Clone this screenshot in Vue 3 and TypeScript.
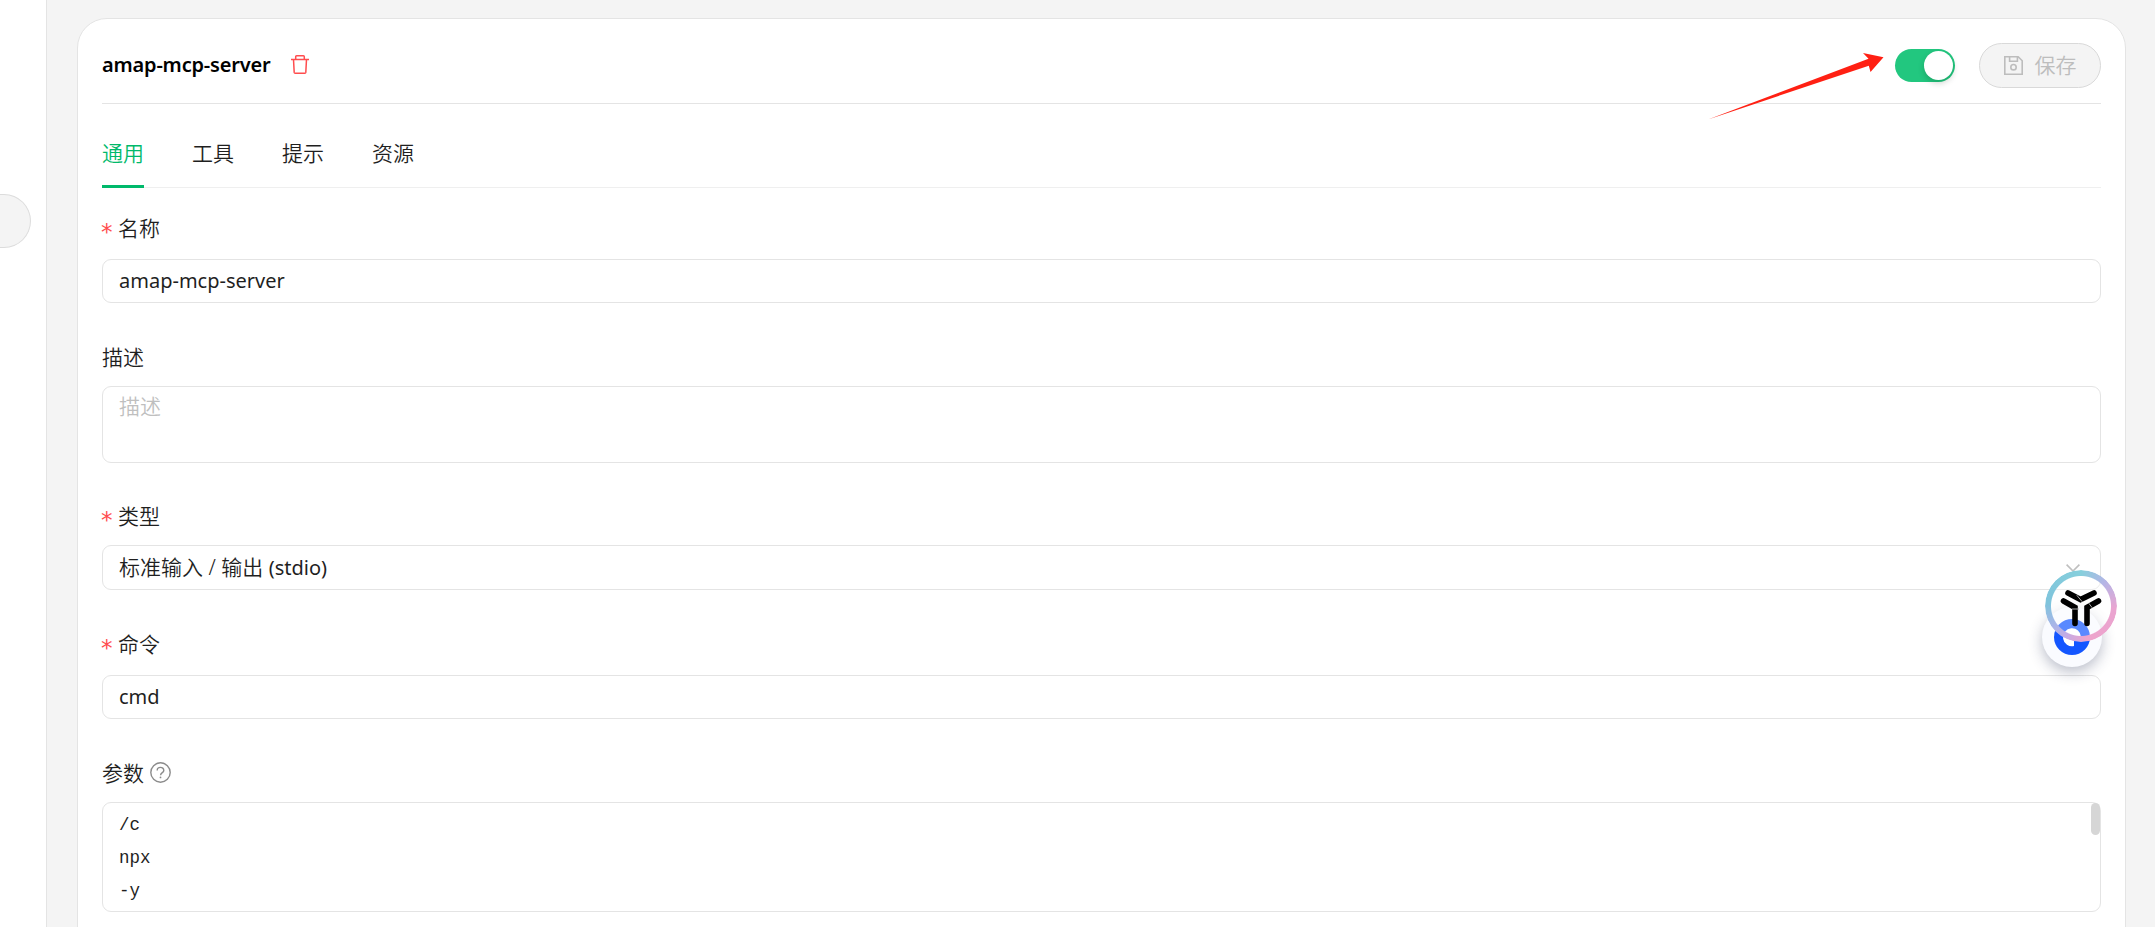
<script setup lang="ts">
import { ref } from 'vue'

interface Tab {
  key: string
  label: string
}

const tabs: Tab[] = [
  { key: 'general', label: '通用' },
  { key: 'tools', label: '工具' },
  { key: 'prompts', label: '提示' },
  { key: 'resources', label: '资源' }
]

const activeTab = ref('general')
const enabled = ref(true)

const form = ref({
  name: 'amap-mcp-server',
  description: '',
  type: '标准输入 / 输出',
  transport: '(stdio)',
  command: 'cmd',
  args: '/c\nnpx\n-y'
})
</script>

<template>
  <div class="page">
    <aside class="sidebar">
      <div class="sidebar-item"></div>
    </aside>

    <main class="content">
      <section class="card">
        <!-- Header -->
        <header class="card-header">
          <h1 class="server-name">{{ form.name }}</h1>
          <button class="delete-btn" aria-label="Delete">
            <svg width="18" height="19" viewBox="0 0 18 19" fill="none" stroke="currentColor" stroke-width="1.5">
              <path d="M0 4.4h18M4.7 4.4V1.7q0-.9.9-.9h6.8q.9 0 .9.9v2.7M2.5 4.4l.7 13q.1.8.9.8h9.8q.8 0 .9-.8l.7-13" />
            </svg>
          </button>
          <div class="header-actions">
            <button
              class="switch"
              :class="{ 'switch-on': enabled }"
              role="switch"
              :aria-checked="enabled"
              @click="enabled = !enabled"
            >
              <span class="switch-handle"></span>
            </button>
            <button class="save-btn" disabled>
              <svg width="19" height="19" viewBox="0 0 19 19" fill="none" stroke="currentColor" stroke-width="1.6">
                <path d="M.8.8h13.4l4 4v13.4H.8zM5.6.8v4.4h7.8V.8" />
                <circle cx="9.5" cy="11.2" r="2.7" />
              </svg>
              <span>保存</span>
            </button>
          </div>
        </header>

        <!-- Tabs -->
        <nav class="tabs">
          <button
            v-for="tab in tabs"
            :key="tab.key"
            class="tab"
            :class="{ active: tab.key === activeTab }"
            @click="activeTab = tab.key"
          >
            {{ tab.label }}
          </button>
        </nav>

        <!-- Form -->
        <form class="form" @submit.prevent>
          <div class="form-item">
            <label class="form-label"><span class="required">*</span>名称</label>
            <input v-model="form.name" class="control" />
          </div>
          <div class="form-item form-item-tight">
            <label class="form-label label-low">描述</label>
            <textarea v-model="form.description" class="control description" placeholder="描述"></textarea>
          </div>
          <div class="form-item form-item-loose">
            <label class="form-label label-low"><span class="required">*</span>类型</label>
            <div class="control select">
              <span>{{ form.type }} <span class="latin">{{ form.transport }}</span></span>
              <svg width="14" height="8" viewBox="0 0 14 8" fill="none" stroke="#bfbfbf" stroke-width="1.6">
                <path d="M.6.6L7 7l6.4-6.4" />
              </svg>
            </div>
          </div>
          <div class="form-item">
            <label class="form-label"><span class="required">*</span>命令</label>
            <input v-model="form.command" class="control" />
          </div>
          <div class="form-item">
            <label class="form-label label-low">
              参数
              <svg class="help" width="21" height="21" viewBox="0 0 21 21" fill="none" stroke="currentColor" stroke-width="1.4">
                <circle cx="10.5" cy="10.5" r="9.7" />
                <path d="M7.2 8.4c0-4.1 6.6-4.1 6.6 0 0 2.2-3.2 2.2-3.2 4.8" />
                <circle cx="10.5" cy="15.4" r=".9" fill="currentColor" stroke="none" />
              </svg>
            </label>
            <div class="args-wrap">
              <textarea v-model="form.args" class="control args"></textarea>
              <span class="scroll-thumb"></span>
            </div>
          </div>
        </form>
      </section>
    </main>

    <!-- Annotation arrow pointing at the switch -->
    <svg class="arrow" width="176" height="68" viewBox="0 0 176 68">
      <path d="M0 67.5L160.5 6.8 155 1l20.5 4.3L162.5 20l-1.7-6.2z" fill="#ff2013" />
    </svg>

    <!-- Floating assistants -->
    <div class="assistant">
      <svg width="60" height="60" viewBox="0 0 60 60">
        <circle cx="30" cy="30" r="18" fill="#1456ff" />
        <path d="M32 39a9 9 0 1 1 7-9h-3.5q-3.5 0-3.5 3.5z" fill="#fff" />
      </svg>
    </div>
    <div class="orb">
      <svg width="60" height="60" viewBox="0 0 60 60" fill="none" stroke="#000" stroke-width="5.6" stroke-linecap="round">
        <path d="M17 17L29.5 23.5 43 17" />
        <path d="M12.5 25L24 31.5V47.5" />
        <path d="M47.5 25L36 31.5V47.5" />
        <path d="M26 19.5l5 6M21.5 33h6M38 27.5l3 4" stroke="#aaa" stroke-width="1" />
      </svg>
    </div>
  </div>
</template>

<style>
body {
  margin: 0;
  overflow: hidden;
}
</style>

<style scoped>
* {
  box-sizing: border-box;
}

.page {
  position: relative;
  display: flex;
  height: 927px;
  overflow: hidden;
  background: #f4f4f4;
  color: #1f1f1f;
  font-family: 'Noto Sans', 'Noto Sans CJK SC', sans-serif;
  font-size: 21px;
  line-height: 30px;
}

button,
input,
textarea {
  margin: 0;
  padding: 0;
  border: none;
  background: none;
  color: inherit;
  font: inherit;
}

.sidebar {
  flex: none;
  width: 47px;
  padding-top: 194px;
  border-right: 1px solid #e4e4e4;
  background: #fff;
}

.sidebar-item {
  width: 31px;
  height: 54px;
  border: 1px solid #dcdcdc;
  border-left: none;
  border-radius: 0 27px 27px 0;
  background: #f4f4f4;
}

.content {
  flex: 1;
  padding: 18px 29px 0 30px;
}

.card {
  height: 960px;
  padding: 0 24px;
  border: 1px solid #e4e4e4;
  border-radius: 30px;
  background: #fff;
}

/* Header */
.card-header {
  display: flex;
  align-items: center;
  height: 85px;
  padding-top: 8px;
  border-bottom: 1px solid #e4e4e4;
}

.server-name {
  margin: 0;
  width: 169px;
  color: #000;
  font-size: 20px;
  font-weight: 600;
  letter-spacing: -0.18px;
  white-space: nowrap;
}

.delete-btn {
  display: flex;
  margin: 0 0 2px 20px;
  color: #ff4d4f;
}

.header-actions {
  display: flex;
  align-items: center;
  gap: 24px;
  margin-left: auto;
}

.switch {
  display: flex;
  width: 60px;
  height: 33px;
  padding: 2px;
  border-radius: 17px;
  background: #bfbfbf;
}

.switch-on {
  justify-content: flex-end;
  background: #22c77f;
}

.switch-handle {
  width: 29px;
  height: 29px;
  border-radius: 50%;
  background: #fff;
  box-shadow: 0 3px 6px rgba(0, 35, 11, 0.2);
}

.save-btn {
  display: flex;
  align-items: center;
  justify-content: center;
  gap: 12px;
  width: 122px;
  height: 45px;
  border: 1px solid #d9d9d9;
  border-radius: 23px;
  background: #f4f4f4;
  color: #bdbdbd;
  font-weight: 350;
}

/* Tabs */
.tabs {
  display: flex;
  gap: 48px;
  height: 84px;
  border-bottom: 1px solid #efefef;
}

.tab {
  height: 84px;
  padding-top: 17px;
  border-bottom: 3px solid transparent;
  font-weight: 350;
}

.tab.active {
  border-bottom-color: #00b96b;
  color: #00b96b;
}

/* Form */
.form {
  padding-top: 20px;
}

.form-item {
  display: flex;
  flex-direction: column;
  margin-bottom: 32px;
}

.form-item-tight {
  margin-bottom: 31px;
}

.form-item-loose {
  margin-bottom: 34px;
}

.form-label {
  display: flex;
  align-items: center;
  height: 40px;
  margin-bottom: 11px;
  font-weight: 350;
}

.label-low {
  padding-top: 3px;
}

.required {
  width: 16px;
  padding-top: 8px;
  color: #ff4d4f;
  font-family: 'DejaVu Sans', sans-serif;
  font-size: 23px;
  font-weight: 400;
  line-height: 30px;
  text-indent: -1px;
}

.help {
  margin-left: 6px;
  color: #8c8c8c;
}

.control {
  display: block;
  width: 100%;
  height: 44px;
  padding: 0 16px 1px;
  border: 1px solid #e4e4e4;
  border-radius: 9px;
  background: #fff;
  outline: none;
  resize: none;
  font-size: 20px;
}

.description {
  height: 77px;
  padding: 4px 16px;
  font-size: 21px;
  font-weight: 350;
}

.description::placeholder {
  color: #bfbfbf;
}

.select {
  display: flex;
  align-items: center;
  justify-content: space-between;
  height: 45px;
  padding: 0 20px 0 16px;
  font-size: 21px;
  font-weight: 350;
}

.latin {
  font-size: 20px;
  font-weight: 400;
}

.args-wrap {
  position: relative;
}

.args {
  height: 110px;
  padding: 6px 16px;
  overflow: hidden;
  font-family: 'Liberation Mono', 'Noto Sans CJK SC', monospace;
  font-size: 17.5px;
  line-height: 33px;
}

.scroll-thumb {
  position: absolute;
  top: 1px;
  right: 1px;
  width: 9px;
  height: 32px;
  border-radius: 5px;
  background: #d6d6d6;
}

/* Overlays */
.arrow {
  position: absolute;
  top: 52px;
  left: 1708px;
}

.assistant {
  position: absolute;
  top: 607px;
  left: 2042px;
  width: 60px;
  height: 60px;
  border-radius: 50%;
  background: #fafbff;
  box-shadow: 0 5px 14px rgba(30, 40, 80, 0.3);
}

.orb {
  position: absolute;
  top: 570px;
  left: 2045px;
  width: 72px;
  height: 72px;
  padding: 6px;
  border-radius: 50%;
  background: rgba(255, 255, 255, 0.3);
}

.orb::before {
  content: '';
  position: absolute;
  inset: 0;
  border-radius: 50%;
  background: conic-gradient(#86cfdc 0deg, #b5b5e6 45deg, #eaa4d0 95deg, #eea4cc 170deg, #c5abe4 205deg, #a9b5e8 235deg, #7fc4dc 275deg, #86cfdc 360deg);
  -webkit-mask: radial-gradient(circle, transparent 29.5px, #000 30.5px);
  mask: radial-gradient(circle, transparent 29.5px, #000 30.5px);
}
</style>
